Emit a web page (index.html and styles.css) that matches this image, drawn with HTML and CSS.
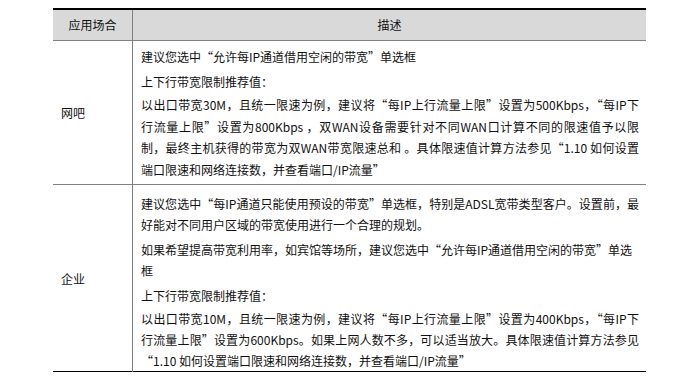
FILE: index.html
```html
<!DOCTYPE html>
<html lang="zh-CN">
<head>
<meta charset="utf-8">
<title>应用场合</title>
<link rel="stylesheet" href="styles.css">
</head>
<body>
<table class="spec">
  <thead>
    <tr>
      <th class="col-scene">应用场合</th>
      <th class="col-desc">描述</th>
    </tr>
  </thead>
  <tbody>
    <tr class="row-netbar">
      <td class="scene">网吧</td>
      <td class="desc">
        <p class="sans">建议您选中“允许每IP通道借用空闲的带宽”单选框</p>
        <p class="song title">上下行带宽限制推荐值：</p>
        <p class="song body">
          <span class="ln full">以出口带宽30M，且统一限速为例，建议将“每IP上行流量上限”设置为500Kbps，“每IP下</span>
          <span class="ln full">行流量上限”设置为800Kbps ，双WAN设备需要针对不同WAN口计算不同的限速值予以限</span>
          <span class="ln full">制，最终主机获得的带宽为双WAN带宽限速总和 。具体限速值计算方法参见“1.10 如何设置</span>
          <span class="ln">端口限速和网络连接数，并查看端口/IP流量”</span>
        </p>
      </td>
    </tr>
    <tr class="row-corp">
      <td class="scene">企业</td>
      <td class="desc">
        <p class="sans">
          <span class="ln full">建议您选中“每IP通道只能使用预设的带宽”单选框，特别是ADSL宽带类型客户。设置前，最</span>
          <span class="ln">好能对不同用户区域的带宽使用进行一个合理的规划。</span>
        </p>
        <p class="sans">
          <span class="ln">如果希望提高带宽利用率，如宾馆等场所，建议您选中“允许每IP通道借用空闲的带宽”单选</span>
          <span class="ln">框</span>
        </p>
        <p class="song title">上下行带宽限制推荐值：</p>
        <p class="song body">
          <span class="ln full">以出口带宽10M，且统一限速为例，建议将“每IP上行流量上限”设置为400Kbps，“每IP下</span>
          <span class="ln full">行流量上限”设置为600Kbps。如果上网人数不多，可以适当放大。具体限速值计算方法参见</span>
          <span class="ln">“1.10 如何设置端口限速和网络连接数，并查看端口/IP流量”</span>
        </p>
      </td>
    </tr>
  </tbody>
</table>
</body>
</html>
```
FILE: styles.css
```css
html, body {
  margin: 0;
  padding: 0;
  background: #ffffff;
}

body {
  padding: 8px 0 0 53px;
  font-family: "Noto Sans CJK SC", "Liberation Sans", sans-serif;
  font-size: 12px;
  color: #111111;
}

.spec {
  width: 593px;
  border-collapse: collapse;
  border-top: 2px solid #000000;
  border-bottom: 1px solid #000000;
}

.spec th {
  background: #d9d9d9;
  font-weight: normal;
  height: 30px;
  padding: 0;
  border-bottom: 1px solid #808080;
  text-align: center;
  vertical-align: middle;
  font-size: 12px;
  line-height: 30px;
}

.col-scene {
  width: 79px;
  border-right: 1px solid #808080;
}

.scene {
  width: 71px;
  border-right: 1px solid #808080;
  text-align: left;
  vertical-align: middle;
  padding: 0 0 0 8px;
}

.desc {
  padding: 5px 7px 4px 8px;
  vertical-align: top;
}

.row-netbar td {
  border-bottom: 1px solid #808080;
}

.row-corp .desc {
  padding-top: 8px;
  padding-bottom: 0;
}

.desc p {
  margin: 0;
  line-height: 21px;
}

.desc p + p {
  margin-top: 4px;
}

.desc p.body {
  margin-top: 2px;
  line-height: 21.5px;
}

.row-corp .desc p.body {
  line-height: 21px;
}

.ln {
  display: block;
}

.ln.full {
  text-align: justify;
  text-align-last: justify;
}

.song {
  letter-spacing: 0;
}
```
